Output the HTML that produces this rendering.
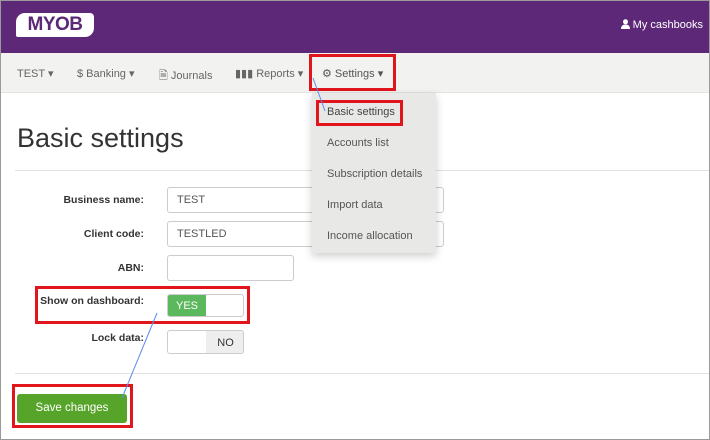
<!DOCTYPE html>
<html><head><style>
*{box-sizing:border-box;margin:0;padding:0}
body{width:710px;height:440px;overflow:hidden;background:#fff;font-family:"Liberation Sans",sans-serif;position:relative}
.a{position:absolute}
.hdr{left:0;top:0;width:710px;height:53px;background:#5c2877}
.logo{left:16px;top:13px;width:78px;height:24px;background:#fff;border-radius:9px 4px 9px 2px;color:#5c2877;font-weight:bold;font-size:19px;letter-spacing:-0.5px;text-align:center;line-height:24px}
.nav{left:0;top:53px;width:710px;height:40px;background:#f2f2f0;border-bottom:1px solid #e4e4e2}
.ni{top:67px;font-size:11px;color:#666}
.red{border:3px solid #e0161c}
.dd{left:312px;top:93px;width:124px;height:160px;background:#e8e8e6;box-shadow:0 3px 8px rgba(0,0,0,.2)}
.di{left:327px;font-size:11px;color:#555}
h1{position:absolute;left:17px;top:123px;font-size:27px;font-weight:normal;color:#333}
.hr{left:15px;width:695px;height:1px;background:#e2e2e2}
.lb{font-size:10.5px;font-weight:bold;color:#333;text-align:right;width:160px;left:-16px;white-space:nowrap}
.in{border:1px solid #ccc;border-radius:3px;background:#fff;font-size:11px;color:#555;padding-left:9px;line-height:24px}
.frame{left:0;top:0;width:710px;height:440px;border:1px solid #9a9a9a;pointer-events:none}
</style></head><body>
<div class="a hdr"></div>
<div class="a logo">MYOB</div>
<div class="a" style="right:7px;top:19px;color:#fff;font-size:11px"><svg width="9" height="10" viewBox="0 0 9 10" style="vertical-align:-1px"><circle cx="4.5" cy="2.8" r="2.5" fill="#fff"/><path d="M0 10 Q0 5.5 4.5 5.5 Q9 5.5 9 10Z" fill="#fff"/></svg> My cashbooks</div>
<div class="a nav"></div>
<div class="a ni" style="left:17px">TEST ▾</div>
<div class="a ni" style="left:77px">$ Banking ▾</div>
<div class="a ni" style="left:159px">🗎&#xFE0E; Journals</div>
<div class="a ni" style="left:235px">▮▮▮ Reports ▾</div>
<div class="a ni" style="left:322px;color:#555">⚙ Settings ▾</div>
<div class="a red" style="left:309px;top:54px;width:87px;height:37px"></div>
<h1>Basic settings</h1>
<div class="a hr" style="top:170px"></div>
<div class="a lb" style="top:194px">Business name:</div>
<div class="a in" style="left:167px;top:187px;width:277px;height:26px">TEST</div>
<div class="a lb" style="top:228px">Client code:</div>
<div class="a in" style="left:167px;top:221px;width:277px;height:26px">TESTLED</div>
<div class="a dd"></div>
<div class="a di" style="top:106px;color:#444">Basic settings</div>
<div class="a di" style="top:137px">Accounts list</div>
<div class="a di" style="top:168px">Subscription details</div>
<div class="a di" style="top:199px">Import data</div>
<div class="a di" style="top:230px">Income allocation</div>
<div class="a red" style="left:316px;top:100px;width:87px;height:26px"></div>
<div class="a lb" style="top:262px">ABN:</div>
<div class="a in" style="left:167px;top:255px;width:127px;height:26px"></div>
<div class="a lb" style="top:295px">Show on dashboard:</div>
<div class="a in" style="left:167px;top:294px;width:77px;height:23px;padding:0;overflow:hidden"><div style="width:38px;height:23px;background:#5cb85c;color:#fff;font-size:11px;text-align:center;line-height:22px">YES</div></div>
<div class="a red" style="left:35px;top:286px;width:215px;height:38px"></div>
<div class="a lb" style="top:332px">Lock data:</div>
<div class="a in" style="left:167px;top:330px;width:77px;height:24px;padding:0;overflow:hidden"><div style="margin-left:38px;width:39px;height:24px;background:#eee;color:#333;font-size:11px;text-align:center;line-height:24px">NO</div></div>
<div class="a hr" style="top:373px"></div>
<div class="a" style="left:17px;top:394px;width:110px;height:29px;background:#57a42a;border-radius:3px;color:#fff;font-size:11.5px;text-align:center;line-height:29px">Save changes</div>
<div class="a red" style="left:12px;top:384px;width:121px;height:44px"></div>
<svg class="a" style="left:0;top:0" width="710" height="440"><line x1="313" y1="78" x2="325" y2="111" stroke="#5b8cf0" stroke-width="1"/><line x1="157" y1="313" x2="122" y2="398" stroke="#5b8cf0" stroke-width="1"/></svg>
<div class="a frame"></div>
</body></html>
